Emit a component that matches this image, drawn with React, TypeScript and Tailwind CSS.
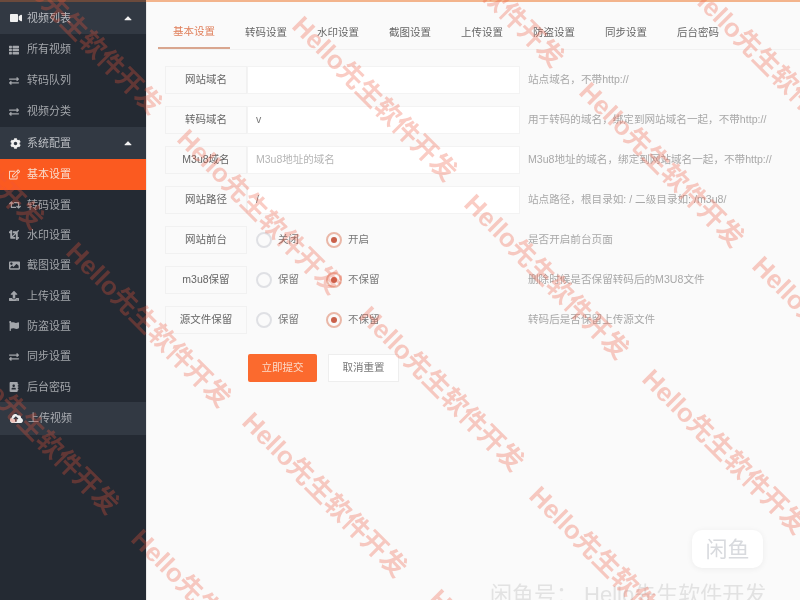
import React from "react";
import {
  FaVideo, FaThList, FaExchangeAlt, FaCog, FaRegEdit, FaRetweet, FaCrop, FaImage,
  FaUpload, FaFlag, FaAddressBook, FaCloudUploadAlt, FaCaretUp,
} from "react-icons/fa";

const FONT = "font-['Liberation_Sans','Noto_Sans_CJK_SC',sans-serif]";

function Header({ icon, label }: { icon: React.ReactNode; label: string }) {
  return (
    <div className="flex h-[32px] items-center bg-[#323943] pl-[10px] pr-[12px] text-[11px] text-[#b9bcc1]">
      <span className="flex w-[17px] text-[#f0f0f0]">{icon}</span>
      <span className="flex-1">{label}</span>
      <FaCaretUp className="text-[12px] text-[#f2f2f2]" />
    </div>
  );
}

function Item({ icon, label, active, tall }: { icon: React.ReactNode; label: string; active?: boolean; tall?: boolean }) {
  return (
    <div className={active
      ? "flex h-[31px] items-center bg-[#fb5a20] pl-[9px] text-[11px] text-[#f9dccd]"
      : tall
        ? "flex h-[31px] items-center pl-[9px] text-[11px] text-[#a3a6ab]"
        : "flex h-[30.3px] items-center pl-[9px] text-[11px] text-[#a3a6ab]"}>
      <span className="flex w-[18px] text-[10px]">{icon}</span>
      <span>{label}</span>
    </div>
  );
}

function Radio({ on, label }: { on?: boolean; label: string }) {
  return (
    <div className="flex items-center">
      <span className={on
        ? "flex h-[16px] w-[16px] items-center justify-center rounded-full border-2 border-[#eab8a8]"
        : "flex h-[16px] w-[16px] items-center justify-center rounded-full border-2 border-[#dfe0e4]"}>
        {on && <span className="h-[6px] w-[6px] rounded-full bg-[#c9604a]" />}
      </span>
      <span className="ml-[6px] text-[10.5px] text-[#777]">{label}</span>
    </div>
  );
}

function Row({ label, help, children }: { label: string; help: string; children: React.ReactNode }) {
  return (
    <div className="flex h-[28px] items-center">
      <div className="flex h-full w-[82px] items-center justify-center border border-[#f1f1f1] bg-[#fafafa] text-[10.5px] text-[#666]">{label}</div>
      <div className="h-full w-[273px]">{children}</div>
      <div className="ml-[8px] whitespace-nowrap text-[10.6px] text-[#a8a8a8]">{help}</div>
    </div>
  );
}

function Input({ value, placeholder }: { value?: string; placeholder?: string }) {
  return (
    <div className="flex h-full items-center border border-[#f3f3f3] bg-white pl-[8px] text-[10.5px]">
      {value && <span className="text-[#777]">{value}</span>}
      {placeholder && <span className="text-[#b5b5b5]">{placeholder}</span>}
    </div>
  );
}

function Radios({ a, b }: { a: string; b: string }) {
  return (
    <div className="flex h-full items-center pl-[9px]">
      <div className="w-[70px]"><Radio label={a} /></div>
      <Radio on label={b} />
    </div>
  );
}

const tabs = ["基本设置", "转码设置", "水印设置", "截图设置", "上传设置", "防盗设置", "同步设置", "后台密码"];
const marks: [number, number][] = [
  [-2, -50], [293, 17], [400, -97], [690, -15], [580, 83], [178, 130], [-120, 65], [465, 195],
  [67, 243], [360, 307], [753, 257], [643, 370], [-45, 350], [243, 413], [530, 487], [132, 530], [430, 590],
];

export default function App() {
  return (
    <div className={`relative h-[600px] w-[800px] overflow-hidden bg-[#fafafa] blur-[0.6px] ${FONT}`}>
      <div className="flex h-[2px]">
        <div className="w-[146px] bg-[#6b4a3c]" />
        <div className="flex-1 bg-[#f3b48c]" />
      </div>
      <div className="flex h-[598px]">
        <aside className="w-[146px] shrink-0 bg-[#242a33]">
          <Header icon={<FaVideo size={12} />} label="视频列表" />
          <Item tall icon={<FaThList />} label="所有视频" />
          <Item tall icon={<FaExchangeAlt />} label="转码队列" />
          <Item tall icon={<FaExchangeAlt />} label="视频分类" />
          <Header icon={<FaCog size={11} />} label="系统配置" />
          <Item active icon={<FaRegEdit size={11} />} label="基本设置" />
          <Item icon={<FaRetweet size={12} />} label="转码设置" />
          <Item icon={<FaCrop />} label="水印设置" />
          <Item icon={<FaImage size={11} />} label="截图设置" />
          <Item icon={<FaUpload />} label="上传设置" />
          <Item icon={<FaFlag />} label="防盗设置" />
          <Item icon={<FaExchangeAlt />} label="同步设置" />
          <Item icon={<FaAddressBook />} label="后台密码" />
          <div className="flex h-[33px] items-center bg-[#323943] pl-[10px] text-[11px] text-[#a9acb1]">
            <span className="flex w-[18px] text-[#eee]"><FaCloudUploadAlt size={13} /></span>
            <span>上传视频</span>
          </div>
        </aside>
        <main className="flex-1 border-l border-[#e9e9e9] pl-[11px]">
          <div className="mt-[14px] flex h-[34px] border-b border-[#f1f1f1]">
            {tabs.map((t, i) => (
              <div key={t} className={i === 0
                ? "flex w-[72px] items-center justify-center border-b-2 border-[#d9a68f] text-[10.5px] text-[#e0805c]"
                : "flex w-[72px] items-center justify-center text-[10.5px] text-[#666]"}>{t}</div>
            ))}
          </div>
          <div className="ml-[7px] mt-[16px] flex flex-col gap-[12px]">
            <Row label="网站域名" help="站点域名，不带http://"><Input /></Row>
            <Row label="转码域名" help="用于转码的域名，绑定到网站域名一起，不带http://"><Input value="v" /></Row>
            <Row label="M3u8域名" help="M3u8地址的域名，绑定到网站域名一起，不带http://"><Input placeholder="M3u8地址的域名" /></Row>
            <Row label="网站路径" help="站点路径，根目录如: / 二级目录如: /m3u8/"><Input value="/" /></Row>
            <Row label="网站前台" help="是否开启前台页面"><Radios a="关闭" b="开启" /></Row>
            <Row label="m3u8保留" help="删除时候是否保留转码后的M3U8文件"><Radios a="保留" b="不保留" /></Row>
            <Row label="源文件保留" help="转码后是否保留上传源文件"><Radios a="保留" b="不保留" /></Row>
          </div>
          <div className="ml-[90px] mt-[20px] flex gap-[11px]">
            <button className="h-[28px] w-[69px] rounded-[2px] bg-[#fb6a2e] text-[10.5px] text-[#fbdccb]">立即提交</button>
            <button className="h-[28px] w-[71px] border border-[#eeeeee] bg-white text-[10.5px] text-[#777]">取消重置</button>
          </div>
        </main>
      </div>
      <div className="absolute left-[692px] top-[530px] flex h-[38px] w-[71px] items-center justify-center rounded-[10px] bg-white text-[22px] text-[#d8dade] shadow-[0_1px_6px_rgba(0,0,0,0.06)]">闲鱼</div>
      <div className="absolute left-[490px] top-[578px] whitespace-nowrap text-[22px] text-[#e2e2e2]">闲鱼号： Hello先生软件开发</div>
      {marks.map(([x, y]) => (
        <span
          key={`${x}-${y}`}
          className="pointer-events-none absolute origin-left rotate-45 whitespace-nowrap text-[26px] font-bold leading-none text-[#f0563c]/30"
          style={{ left: x + 4, top: y - 9 }}
        >
          Hello先生软件开发
        </span>
      ))}
    </div>
  );
}
